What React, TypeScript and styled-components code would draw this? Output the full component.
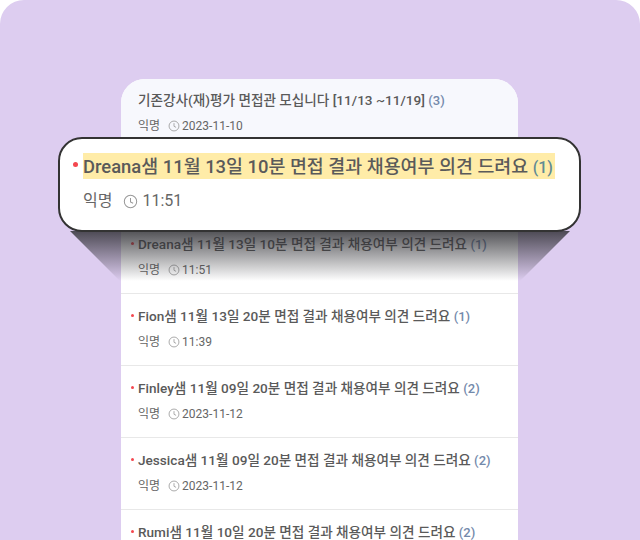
import styled, { createGlobalStyle } from 'styled-components'

const posts = [
  { title: 'Dreana샘 11월 13일 10분 면접 결과 채용여부 의견 드려요', count: 1, time: '11:51' },
  { title: 'Fion샘 11월 13일 20분 면접 결과 채용여부 의견 드려요', count: 1, time: '11:39' },
  { title: 'Finley샘 11월 09일 20분 면접 결과 채용여부 의견 드려요', count: 2, time: '2023-11-12' },
  { title: 'Jessica샘 11월 09일 20분 면접 결과 채용여부 의견 드려요', count: 2, time: '2023-11-12' },
  { title: 'Rumi샘 11월 10일 20분 면접 결과 채용여부 의견 드려요', count: 2, time: '2023-11-12' },
]

function Clock({ size }: { size: number }) {
  return (
    <svg width={size} height={size} viewBox="0 0 16 16" fill="none" stroke="#999" strokeWidth="1.1">
      <circle cx="8" cy="8" r="6.6" />
      <path d="M8 4.2V8.4L10.8 9.8" />
    </svg>
  )
}

export default function App() {
  return (
    <Frame>
      <GlobalStyle />
      <List>
        <Row $notice $height={71}>
          <Title>기존강사(재)평가 면접관 모십니다 [11/13 ~11/19] <Count>(3)</Count></Title>
          <Meta>
            <span>익명</span>
            <Time><Clock size={12} />2023-11-10</Time>
          </Meta>
        </Row>
        <Row $notice $height={72} />
        {posts.map((post) => (
          <Row key={post.title} $height={72}>
            <Title>
              <Dot />
              {post.title} <Count>({post.count})</Count>
            </Title>
            <Meta>
              <span>익명</span>
              <Time><Clock size={12} />{post.time}</Time>
            </Meta>
          </Row>
        ))}
      </List>
      <Wedge />
      <Popout>
        <BigTitle>
          <BigDot />
          <Mark>Dreana샘 11월 13일 10분 면접 결과 채용여부 의견 드려요 <BigCount>(1)</BigCount></Mark>
        </BigTitle>
        <BigMeta>
          <span>익명</span>
          <BigTime><Clock size={15} />11:51</BigTime>
        </BigMeta>
      </Popout>
    </Frame>
  )
}

const GlobalStyle = createGlobalStyle`
  html, body {
    margin: 0;
    background: #fff;
  }
  body {
    font-family: Roboto, "Noto Sans CJK KR", sans-serif;
  }
`

const Frame = styled.main`
  position: relative;
  width: 640px;
  height: 540px;
  overflow: hidden;
  box-sizing: border-box;
  padding: 79px 122px 0 121px;
  background: #ddcdf0;
  border-radius: 24px 24px 0 0;
`

const List = styled.section`
  display: flex;
  flex-direction: column;
  background: #fff;
  border-radius: 24px 24px 0 0;
  overflow: hidden;
`

const Row = styled.article<{ $notice?: boolean; $height: number }>`
  flex: none;
  box-sizing: border-box;
  height: ${(p) => p.$height}px;
  padding: ${(p) => (p.$notice ? 11 : 12)}px 16px 0 17px;
  background: ${(p) => (p.$notice ? '#f7f8fd' : '#fff')};
  border-bottom: ${(p) => (p.$notice ? 'none' : '1px solid #e8e8e8')};
`

const Title = styled.div`
  position: relative;
  font-size: 13.6px;
  font-weight: 500;
  line-height: 20px;
  color: #5a5a5a;
  white-space: nowrap;
`

const Dot = styled.i`
  position: absolute;
  left: -7px;
  top: 8px;
  width: 3px;
  height: 3px;
  border-radius: 50%;
  background: #f4474f;
`

const Count = styled.span`
  color: #7389ab;
  font-size: 13px;
`

const Meta = styled.div`
  display: flex;
  align-items: center;
  gap: 8px;
  margin-top: 7px;
  font-size: 12px;
  line-height: 16px;
  color: #666;
`

const Time = styled.span`
  display: flex;
  align-items: center;
  gap: 2px;
`

const Wedge = styled.div`
  position: absolute;
  left: 70px;
  top: 231px;
  width: 500px;
  height: 50px;
  background: linear-gradient(180deg, rgba(45, 45, 50, 0.82) 0%, rgba(45, 45, 50, 0) 100%);
  clip-path: polygon(0 0, 100% 0, 90% 100%, 10% 100%);
`

const Popout = styled.section`
  position: absolute;
  left: 58px;
  top: 137px;
  box-sizing: border-box;
  width: 523px;
  height: 95px;
  padding: 14px 23px 0;
  background: #fff;
  border: 2px solid #333;
  border-radius: 24px;
`

const BigTitle = styled.div`
  position: relative;
  font-size: 18.4px;
  font-weight: 500;
  line-height: 26px;
  color: #5a5a5a;
  white-space: nowrap;
`

const BigDot = styled.i`
  position: absolute;
  left: -10px;
  top: 9px;
  width: 5px;
  height: 5px;
  border-radius: 50%;
  background: #f4474f;
`

const Mark = styled.span`
  display: inline-block;
  box-sizing: border-box;
  height: 26px;
  padding: 1px 2px 0 0;
  line-height: 25px;
  background: #ffeca8;
`

const BigCount = styled.span`
  color: #5f8a94;
  font-size: 16px;
`

const BigMeta = styled.div`
  display: flex;
  align-items: center;
  gap: 11px;
  margin-top: 9px;
  font-size: 16px;
  line-height: 24px;
  color: #666;
`

const BigTime = styled.span`
  display: flex;
  align-items: center;
  gap: 4px;
`
